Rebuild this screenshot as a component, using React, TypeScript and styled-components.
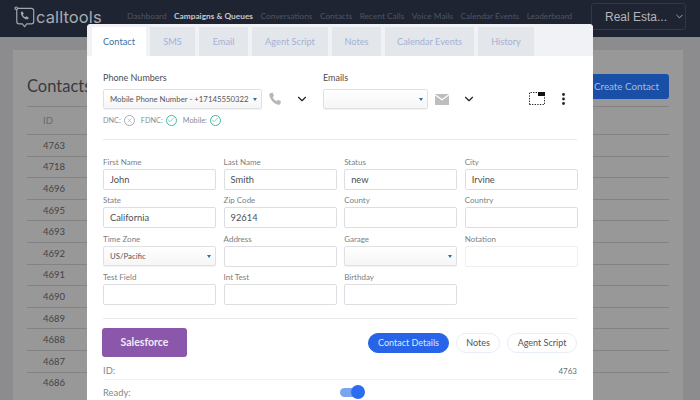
import React from "react";
import styled, { createGlobalStyle } from "styled-components";
import { ChevronDown, Check, X } from "lucide-react";

const GlobalStyle = createGlobalStyle`
  html, body {
    margin: 0;
    padding: 0;
    width: 700px;
    height: 400px;
    overflow: hidden;
    background: #8c8c8e;
    font-family: "Lato", "Noto Sans", sans-serif;
  }
  * { box-sizing: border-box; }
`;

const Page = styled.div`
  position: relative;
  width: 700px;
  height: 400px;
  overflow: hidden;
`;

const Header = styled.header`
  height: 37px;
  background: #1f2433;
  display: flex;
  align-items: flex-start;
  padding: 5px 0 0 14px;
`;

const LogoBox = styled.div`
  display: flex;
  align-items: center;
  width: 113px;
  height: 24px;
`;

const LogoText = styled.span`
  font-family: "Inter", "Liberation Sans", sans-serif;
  font-size: 16.5px;
  letter-spacing: 0.1px;
  color: #a7abb3;
`;

const Nav = styled.nav`
  display: flex;
  gap: 7.5px;
  padding-top: 5px;
  font-size: 8.3px;
  line-height: 12px;
`;

const NavItem = styled.span<{ $active?: boolean }>`
  color: ${(p) => (p.$active ? "#c4c7cd" : "#4f5461")};
  font-weight: ${(p) => (p.$active ? 700 : 400)};
  white-space: nowrap;
`;

const AccountButton = styled.div`
  position: absolute;
  left: 591px;
  top: 3px;
  width: 95px;
  height: 27px;
  border: 1px solid #333846;
  border-radius: 3px;
  display: flex;
  align-items: center;
  gap: 7px;
  padding-left: 13px;
  font-family: "Liberation Sans", sans-serif;
  font-size: 12px;
  color: #b4b6bb;
  white-space: nowrap;
`;

const Content = styled.main`
  height: 350px;
  margin: 13px 0 0 13px;
  width: 670px;
  background: #989898;
  padding: 20px 14px 0;
  overflow: hidden;
`;

const TitleRow = styled.div`
  display: flex;
  align-items: center;
  justify-content: space-between;
  height: 32px;
`;

const Title = styled.h1`
  margin: 0;
  font-size: 16.5px;
  font-weight: 400;
  color: #3a3a3c;
`;

const CreateButton = styled.div`
  width: 90px;
  height: 25px;
  border-radius: 3px;
  background: #194fa6;
  color: #a9bcdc;
  font-size: 9.8px;
  line-height: 25px;
  text-align: right;
  padding-right: 10px;
`;

const Table = styled.div`
  margin-top: 4px;
`;

const Row = styled.div<{ $head?: boolean }>`
  height: ${(p) => (p.$head ? 28 : 21.6)}px;
  border-top: 1px solid #838383;
  padding-left: 16px;
  font-size: 9.5px;
  display: flex;
  align-items: center;
  color: ${(p) => (p.$head ? "#6a6a6a" : "#444446")};
`;

const Modal = styled.section`
  position: absolute;
  left: 87px;
  top: 24px;
  width: 506px;
  height: 376px;
  background: #fff;
  border-radius: 4px 4px 0 0;
  overflow: hidden;
`;

const TabStrip = styled.div`
  height: 32px;
  background: #f0f2f5;
  display: flex;
  align-items: flex-end;
  padding-left: 5px;
  gap: 4px;
`;

const Tab = styled.div<{ $active?: boolean; $w: number }>`
  width: ${(p) => p.$w}px;
  height: 29px;
  background: ${(p) => (p.$active ? "#fff" : "#e3e6ea")};
  color: ${(p) => (p.$active ? "#3c6f9f" : "#a3b3d6")};
  font-size: 9.2px;
  line-height: 29px;
  text-align: center;
  white-space: nowrap;
`;

const Body = styled.div`
  padding: 15px 16px 0;
  color: #4a4d52;
`;

const TopGrid = styled.div`
  display: flex;
  align-items: flex-start;
  height: 38px;
`;

const Group = styled.div<{ $w: number }>`
  width: ${(p) => p.$w}px;
  flex: none;
`;

const GroupLabel = styled.div`
  font-size: 9px;
  line-height: 13px;
  height: 18px;
  color: #4b4e53;
`;

const SelectRow = styled.div`
  display: flex;
  align-items: center;
`;

const SelectBox = styled.div<{ $w?: number }>`
  position: relative;
  width: ${(p) => (p.$w ? `${p.$w}px` : "100%")};
  height: 20px;
  flex: none;
  border: 1px solid #dfe1e4;
  border-radius: 2px;
  background: linear-gradient(#ffffff, #f6f6f7);
  box-shadow: 0 1px 1px rgba(0, 0, 0, 0.06);
  font-size: 7.8px;
  line-height: 18px;
  padding-left: 6px;
  color: #54585e;
  white-space: nowrap;
`;

const Caret = styled.span`
  position: absolute;
  right: 4px;
  top: 8px;
  border-left: 2.5px solid transparent;
  border-right: 2.5px solid transparent;
  border-top: 3px solid #2f6f9f;
`;

const GroupIcon = styled.svg<{ $ml: number }>`
  margin-left: ${(p) => p.$ml}px;
  flex: none;
  display: block;
`;

const Chevron = styled(ChevronDown)<{ $ml: number }>`
  margin-left: ${(p) => p.$ml}px;
  flex: none;
  color: #222;
`;

const ToolIcons = styled.div`
  display: flex;
  align-items: center;
  gap: 17px;
  padding: 21px 0 0 49px;
`;

const StatusRow = styled.div`
  display: flex;
  align-items: center;
  height: 14px;
  margin-top: 4px;
  font-size: 7.3px;
  color: #888c92;
`;

const StatusDot = styled.span<{ $on?: boolean }>`
  width: 11px;
  height: 11px;
  border-radius: 50%;
  border: 1px solid ${(p) => (p.$on ? "#4db3a2" : "#a9adb2")};
  color: ${(p) => (p.$on ? "#4db3a2" : "#a9adb2")};
  display: inline-flex;
  align-items: center;
  justify-content: center;
  margin: 0 6px 0 3px;
`;

const Divider = styled.hr<{ $top: number; $bottom: number }>`
  border: 0;
  border-top: 1px solid #e9eaec;
  margin: ${(p) => p.$top}px 0 ${(p) => p.$bottom}px;
`;

const FieldGrid = styled.div`
  display: grid;
  grid-template-columns: repeat(4, 113.25px);
  column-gap: 7.33px;
  row-gap: 5.4px;
`;

const Field = styled.div`
  height: 33px;
  display: flex;
  flex-direction: column;
`;

const FieldLabel = styled.label`
  font-size: 8px;
  line-height: 10px;
  height: 12px;
  color: #7b7f85;
  white-space: nowrap;
`;

const TextBox = styled.div<{ $faint?: boolean }>`
  height: 21px;
  border: 1px solid ${(p) => (p.$faint ? "#eeeff1" : "#dcdee1")};
  border-radius: 2px;
  background: #fff;
  font-size: 9.3px;
  line-height: 19px;
  padding-left: 6px;
  color: #4c4f54;
`;

const ActionRow = styled.div`
  display: flex;
  align-items: center;
  justify-content: space-between;
  height: 30px;
  margin-bottom: 5px;
`;

const Salesforce = styled.div`
  width: 85px;
  height: 29px;
  margin-left: -1px;
  border-radius: 3px;
  background: #8b57ab;
  color: #f1e9f6;
  font-size: 10.5px;
  font-weight: 700;
  line-height: 29px;
  text-align: center;
`;

const Pills = styled.div`
  display: flex;
  gap: 7px;
  margin-top: 2px;
`;

const Pill = styled.div<{ $active?: boolean; $w: number }>`
  width: ${(p) => p.$w}px;
  height: 20px;
  border-radius: 10px;
  border: 1px solid ${(p) => (p.$active ? "#2864e8" : "#e6edf6")};
  background: ${(p) => (p.$active ? "#2864e8" : "#fff")};
  color: ${(p) => (p.$active ? "#dfe8fb" : "#50545a")};
  font-size: 9px;
  line-height: 18px;
  text-align: center;
  white-space: nowrap;
`;

const InfoRow = styled.div<{ $line?: boolean }>`
  display: flex;
  align-items: center;
  justify-content: space-between;
  height: ${(p) => (p.$line ? 18 : 24)}px;
  font-size: 9.4px;
  color: #85888d;
  border-bottom: ${(p) => (p.$line ? "1px solid #f2f3f4" : "0")};
`;

const IdValue = styled.span`
  font-size: 8px;
  color: #6b6e73;
`;

const Toggle = styled.span`
  position: relative;
  width: 22px;
  height: 9px;
  margin-right: 215px;
  border-radius: 5px;
  background: #7ba4f0;
`;

const Knob = styled.span`
  position: absolute;
  right: -3px;
  top: -3px;
  width: 14px;
  height: 14px;
  border-radius: 50%;
  background: #2c6df0;
`;

const ids = ["4763", "4718", "4696", "4695", "4693", "4692", "4691", "4690", "4689", "4688", "4687", "4686"];

const navItems = ["Dashboard", "Campaigns & Queues", "Conversations", "Contacts", "Recent Calls", "Voice Mails", "Calendar Events", "Leaderboard"];

const tabs: [string, number][] = [
  ["Contact", 54],
  ["SMS", 45],
  ["Email", 49],
  ["Agent Script", 76],
  ["Notes", 49],
  ["Calendar Events", 89],
  ["History", 56],
];

const fields: { label: string; value?: string; select?: boolean; faint?: boolean }[] = [
  { label: "First Name", value: "John" },
  { label: "Last Name", value: "Smith" },
  { label: "Status", value: "new" },
  { label: "City", value: "Irvine" },
  { label: "State", value: "California" },
  { label: "Zip Code", value: "92614" },
  { label: "County" },
  { label: "Country" },
  { label: "Time Zone", value: "US/Pacific", select: true },
  { label: "Address" },
  { label: "Garage", select: true },
  { label: "Notation", faint: true },
  { label: "Test Field" },
  { label: "Int Test" },
  { label: "Birthday" },
];

const Logo = () => (
  <svg width="22" height="24" viewBox="0 0 24 24" fill="none" stroke="#a2a6ae" strokeWidth="1.3">
    <path d="M3 2.500h16a2.500 2.500 0 0 1 2.500 2.500v12a2.500 2.500 0 0 1-2.500 2.500h-5l-2.500 3-2.500-3H5.500A2.500 2.500 0 0 1 3 17V2.500z" />
    <circle cx="2.500" cy="2.500" r="1.400" fill="#1f2433" />
    <path
      d="M7.500 6.500l1.800-.6 1.400 2.600-1.100 1c.5 1.300 1.400 2.200 2.800 2.800l1-1.100 2.600 1.400-.6 1.800c-3.800.8-8.600-3.900-7.900-7.900z"
      fill="#a2a6ae"
      stroke="none"
    />
  </svg>
);

const PhoneIcon = () => (
  <GroupIcon $ml={6} width="15" height="15" viewBox="0 0 15 15">
    <path
      d="M2.200 1.200L4.600.6l1.500 3.300-1.500 1.200c.8 1.900 2 3.200 3.900 4.100l1.300-1.500 3.200 1.600-.6 2.400c-.3.900-1.200 1.300-2.200 1.100C5.800 11.900 2.300 8 1.400 3.300c-.1-1 .1-1.800.8-2.100z"
      fill="#b5b8ba"
    />
  </GroupIcon>
);

const MailIcon = () => (
  <GroupIcon $ml={7} width="14" height="11" viewBox="0 0 14 11">
    <rect width="14" height="11" fill="#bcbec0" />
    <path d="M0 .8l7 5 7-5" fill="none" stroke="#fff" strokeWidth="1.200" />
  </GroupIcon>
);

const SelectionIcon = () => (
  <svg width="16" height="13" viewBox="0 0 16 13" fill="none">
    <path d="M.5 12.500V.5H8M.5 12.500H15.500V4" stroke="#222" strokeWidth="1" strokeDasharray="1.300 1.300" />
    <rect x="9" y="0" width="7" height="4" fill="#111" />
  </svg>
);

const KebabIcon = () => (
  <svg width="3" height="12" viewBox="0 0 3 12">
    <circle cx="1.500" cy="1.500" r="1.400" fill="#222" />
    <circle cx="1.500" cy="6" r="1.400" fill="#222" />
    <circle cx="1.500" cy="10.500" r="1.400" fill="#222" />
  </svg>
);

export default function App() {
  return (
    <Page>
      <GlobalStyle />
      <Header>
        <LogoBox>
          <Logo />
          <LogoText>calltools</LogoText>
        </LogoBox>
        <Nav>
          {navItems.map((n) => (
            <NavItem key={n} $active={n === "Campaigns & Queues"}>
              {n}
            </NavItem>
          ))}
        </Nav>
        <AccountButton>
          Real Esta...
          <ChevronDown size={11} />
        </AccountButton>
      </Header>
      <Content>
        <TitleRow>
          <Title>Contacts</Title>
          <CreateButton>Create Contact</CreateButton>
        </TitleRow>
        <Table>
          <Row $head>ID</Row>
          {ids.map((id) => (
            <Row key={id}>{id}</Row>
          ))}
        </Table>
      </Content>
      <Modal>
        <TabStrip>
          {tabs.map(([t, w], i) => (
            <Tab key={t} $w={w} $active={i === 0}>
              {t}
            </Tab>
          ))}
        </TabStrip>
        <Body>
          <TopGrid>
            <Group $w={220}>
              <GroupLabel>Phone Numbers</GroupLabel>
              <SelectRow>
                <SelectBox $w={159}>
                  Mobile Phone Number - +17145550322
                  <Caret />
                </SelectBox>
                <PhoneIcon />
                <Chevron $ml={12} size={14} strokeWidth={2} />
              </SelectRow>
            </Group>
            <Group $w={157}>
              <GroupLabel>Emails</GroupLabel>
              <SelectRow>
                <SelectBox $w={105}>
                  <Caret />
                </SelectBox>
                <MailIcon />
                <Chevron $ml={13} size={14} strokeWidth={2} />
              </SelectRow>
            </Group>
            <ToolIcons>
              <SelectionIcon />
              <KebabIcon />
            </ToolIcons>
          </TopGrid>
          <StatusRow>
            <span>DNC:</span>
            <StatusDot>
              <X size={7} />
            </StatusDot>
            <span>FDNC:</span>
            <StatusDot $on>
              <Check size={8} />
            </StatusDot>
            <span>Mobile:</span>
            <StatusDot $on>
              <Check size={8} />
            </StatusDot>
          </StatusRow>
          <Divider $top={12} $bottom={17} />
          <FieldGrid>
            {fields.map((f) => (
              <Field key={f.label}>
                <FieldLabel>{f.label}</FieldLabel>
                {f.select ? (
                  <SelectBox>
                    {f.value}
                    <Caret />
                  </SelectBox>
                ) : (
                  <TextBox $faint={f.faint}>{f.value}</TextBox>
                )}
              </Field>
            ))}
          </FieldGrid>
          <Divider $top={13} $bottom={8} />
          <ActionRow>
            <Salesforce>Salesforce</Salesforce>
            <Pills>
              <Pill $active $w={81}>
                Contact Details
              </Pill>
              <Pill $w={44}>Notes</Pill>
              <Pill $w={70}>Agent Script</Pill>
            </Pills>
          </ActionRow>
          <InfoRow $line>
            <span>ID:</span>
            <IdValue>4763</IdValue>
          </InfoRow>
          <InfoRow>
            <span>Ready:</span>
            <Toggle>
              <Knob />
            </Toggle>
          </InfoRow>
        </Body>
      </Modal>
    </Page>
  );
}
